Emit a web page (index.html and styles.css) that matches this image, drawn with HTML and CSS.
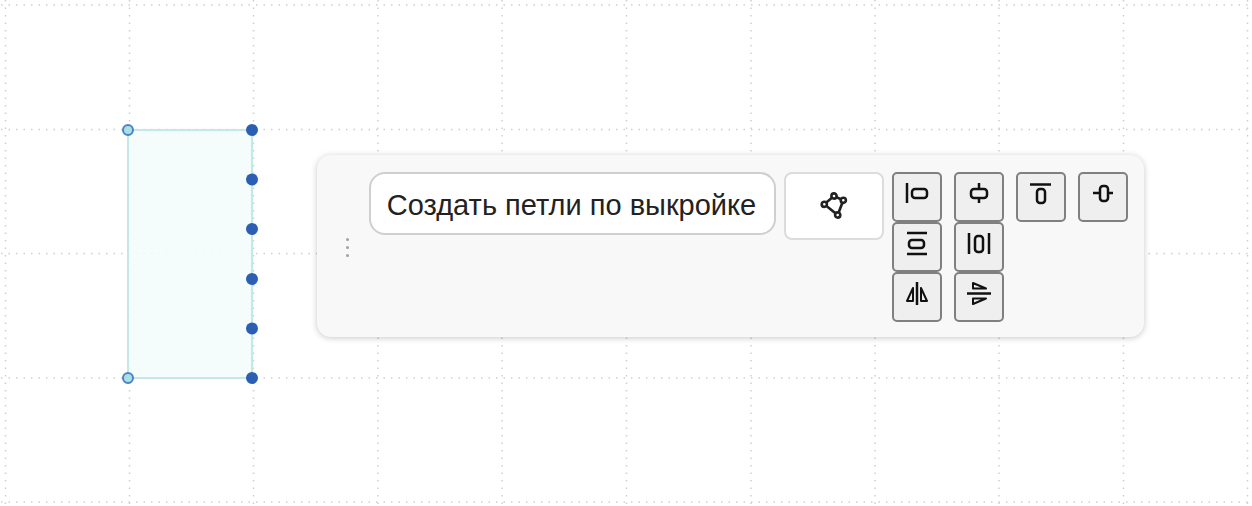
FILE: index.html
```html
<!DOCTYPE html>
<html lang="ru">

<head>
    <meta charset="UTF-8">
    <title>Выкройка</title>
    <link rel="stylesheet" href="styles.css">
</head>

<body>
    <svg class="canvas" width="1252" height="506" viewBox="0 0 1252 506">
        <path class="grid" d="M5.5 0V506M129.5 0V506M253.5 0V506M378 0V506M502 0V506M626.5 0V506M751 0V506M875 0V506M999 0V506M1123.5 0V506M1247.5 0V506" />
        <path class="grid" d="M1 5H1248M1 129.5H1248M1 253.5H1248M1 378H1248M1 502H1248" />
        <rect class="shape" x="128" y="130" width="124" height="248" />
        <circle class="handle_open" cx="128" cy="130" r="5" />
        <circle class="handle_open" cx="128" cy="378" r="5" />
        <circle class="handle" cx="252" cy="130" r="6" />
        <circle class="handle" cx="252" cy="179.5" r="6" />
        <circle class="handle" cx="252" cy="229" r="6" />
        <circle class="handle" cx="252" cy="279" r="6" />
        <circle class="handle" cx="252" cy="328.5" r="6" />
        <circle class="handle" cx="252" cy="378" r="6" />
    </svg>

    <div class="panel">
        <div class="grip"><span></span><span></span><span></span></div>
        <button class="loops_btn" type="button">Создать петли по выкройке</button>
        <button class="shape_btn" type="button" title="Фигура">
            <svg width="30" height="30" viewBox="-15 -15 30 30">
                <path d="M0 -10L9.3 -5.7L3.7 9L-9.7 -1.7Z" />
                <circle cx="0" cy="-10" r="2.6" />
                <circle cx="9.3" cy="-5.7" r="2.6" />
                <circle cx="3.7" cy="9" r="2.6" />
                <circle cx="-9.7" cy="-1.7" r="2.6" />
            </svg>
        </button>
        <div class="tools">
            <button class="tool" type="button">
                <svg viewBox="2 2 46 46"><path d="M15 11V31" /><rect x="20" y="17" width="15" height="9" rx="3" /></svg>
            </button>
            <button class="tool" type="button">
                <svg viewBox="2 2 46 46"><path d="M25 11V17M25 26V31" /><rect x="17" y="17" width="16" height="9" rx="3" /></svg>
            </button>
            <button class="tool" type="button">
                <svg viewBox="2 2 46 46"><path d="M14 12.5H35" /><rect x="21" y="17" width="8" height="14" rx="3" /></svg>
            </button>
            <button class="tool" type="button">
                <svg viewBox="2 2 46 46"><path d="M15 21H22M30 21H35" /><rect x="22" y="14" width="8" height="15" rx="3" /></svg>
            </button>
            <button class="tool new_row" type="button">
                <svg viewBox="2 2 46 46"><path d="M15 11H35M15 32H35" /><rect x="17" y="18" width="15" height="8" rx="3" /></svg>
            </button>
            <button class="tool" type="button">
                <svg viewBox="2 2 46 46"><path d="M15 11V32M35 11V32" /><rect x="21" y="14" width="8" height="16" rx="3" /></svg>
            </button>
            <button class="tool new_row" type="button">
                <svg viewBox="2 2 46 46"><path d="M25 10V33" /><path class="tri" d="M21 16V29H15Z" /><path class="tri" d="M29 16V29H35Z" /></svg>
            </button>
            <button class="tool" type="button">
                <svg viewBox="2 2 46 46"><path d="M13 21.5H37" /><path class="tri" d="M19 11L32 16.5H19Z" /><path class="tri" d="M19 26.5H32L19 32Z" /></svg>
            </button>
        </div>
    </div>
</body>

</html>
```

FILE: styles.css
```css
body {
    margin: 0;
    height: 506px;
    overflow: hidden;
    background: #fff;
    font-family: "Liberation Sans", Arial, sans-serif;
}

.canvas {
    position: absolute;
    top: 0;
    left: 0;
}

.grid {
    fill: none;
    stroke: #cfcfcf;
    stroke-width: 1.5;
    stroke-dasharray: 1.5 6;
}

.shape {
    fill: #f2fcfb;
    fill-opacity: 0.85;
    stroke: #c4e8e8;
    stroke-width: 2;
}

.handle {
    fill: #2a5fb4;
}

.handle_open {
    fill: #a9e0e2;
    stroke: #4f82c6;
    stroke-width: 2;
}

.panel {
    position: absolute;
    top: 155px;
    left: 317px;
    width: 827px;
    height: 182px;
    box-sizing: border-box;
    padding: 17px 16px 15px;
    display: flex;
    align-items: flex-start;
    background: #f8f8f8;
    border-radius: 14px;
    box-shadow: 0 1px 6px rgba(0, 0, 0, 0.22);
}

.grip {
    width: 28px;
    margin-right: 8px;
    align-self: center;
    display: flex;
    flex-direction: column;
    align-items: center;
    gap: 5px;
}

.grip span {
    width: 3px;
    height: 3px;
    border-radius: 50%;
    background: #a0a0a0;
}

.loops_btn {
    width: 407px;
    height: 63px;
    padding: 3px 2px 0 0;
    margin-right: 8px;
    background: #fff;
    border: 2px solid #cfcfcf;
    border-radius: 16px;
    color: #222;
    font: 29px "Liberation Sans", Arial, sans-serif;
}

.shape_btn {
    width: 100px;
    height: 68px;
    padding: 0;
    margin-right: 8px;
    display: flex;
    align-items: center;
    justify-content: center;
    background: #fff;
    border: 2px solid #dcdcdc;
    border-radius: 8px;
}

.shape_btn svg {
    fill: none;
    stroke: #222;
    stroke-width: 2.6;
}

.shape_btn circle {
    fill: #fff;
}

.tools {
    display: grid;
    grid-template-columns: repeat(4, 50px);
    grid-auto-rows: 50px;
    column-gap: 12px;
}

.tool {
    width: 50px;
    height: 50px;
    padding: 0;
    display: flex;
    background: #efefef;
    border: 2px solid #808080;
    border-radius: 5px;
}

.tool svg {
    width: 46px;
    height: 46px;
    fill: none;
    stroke: #111;
    stroke-width: 2.5;
    stroke-linejoin: round;
}

.tool .tri {
    stroke-width: 2;
}

.new_row {
    grid-column: 1;
}
```
